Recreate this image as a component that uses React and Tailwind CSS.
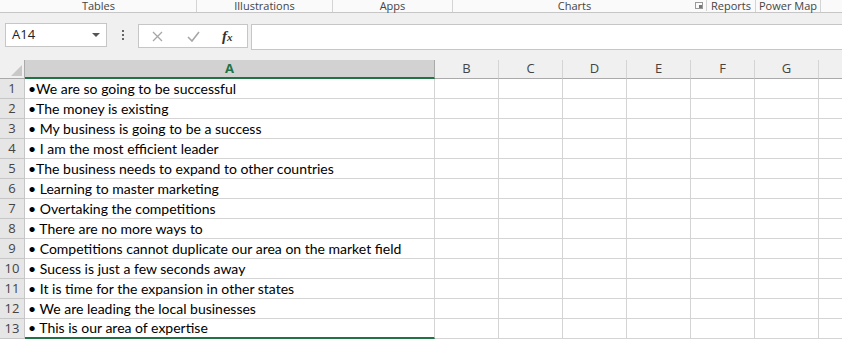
import React from 'react';

const rows = [
  '•We are so going to be successful',
  '•The money is existing',
  '• My business is going to be a success',
  '• I am the most efficient leader',
  '•The business needs to expand to other countries',
  '• Learning to master marketing',
  '• Overtaking the competitions',
  '• There are no more ways to',
  '• Competitions cannot duplicate our area on the market field',
  '• Sucess is just a few seconds away',
  '• It is time for the expansion in other states',
  '• We are leading the local businesses',
  '• This is our area of expertise',
];

const cols = ['B', 'C', 'D', 'E', 'F', 'G'];

const Ribbon = () => (
  <div className="h-[13px] bg-[#fafafa] border-b border-[#c6c6c6] flex items-start text-[11px] text-[#444] leading-[12px]" style={{ fontFamily: '"Open Sans", sans-serif' }}>
    <div className="w-[197px] flex justify-center pl-[1px] border-r border-[#d4d4d4] h-[12px]">Tables</div>
    <div className="w-[136px] flex justify-center border-r border-[#d4d4d4] h-[12px]">Illustrations</div>
    <div className="w-[120px] flex justify-center border-r border-[#d4d4d4] h-[12px]">Apps</div>
    <div className="w-[242px] flex justify-center pl-[1px] h-[12px]">Charts</div>
    <div className="w-[8px] h-[7px] border border-[#999] relative mt-[2px]">
      <div className="absolute right-0 bottom-0 w-[3px] h-[3px] bg-[#777]" />
    </div>
    <div className="w-[4px] h-[11px] border-r border-[#d4d4d4]" />
    <div className="px-[4px] h-[12px] flex border-r border-[#d4d4d4]">Reports</div>
    <div className="px-[3px] h-[12px] flex border-r border-[#d4d4d4]">Power Map</div>
  </div>
);

const FormulaBar = () => (
  <div className="h-[47px] bg-[#f0f0f0] flex items-start pt-[10px] pl-[5px]" style={{ fontFamily: '"Open Sans", sans-serif' }}>
    <div className="w-[102px] h-[24px] bg-white border border-[#c6c6c6] flex items-center justify-between pl-[6px] pr-[6px] text-[13px] text-[#222]">
      <span>A14</span>
      <svg width="8" height="4" viewBox="0 0 8 4"><path d="M0 0h8L4 4z" fill="#555" /></svg>
    </div>
    <div className="w-[31px] flex flex-col items-center justify-center gap-[2px] h-[24px]">
      <div className="w-[2px] h-[2px] bg-[#666]" />
      <div className="w-[2px] h-[2px] bg-[#666]" />
      <div className="w-[2px] h-[2px] bg-[#666]" />
    </div>
    <div className="w-[110px] h-[24px] bg-white border border-[#c6c6c6] flex items-center mt-[1px]">
      <svg className="ml-[13px]" width="11" height="11" viewBox="0 0 11 11"><path d="M1 1l9 9M10 1l-9 9" stroke="#a6a6a6" strokeWidth="1.3" /></svg>
      <svg className="ml-[24px]" width="13" height="11" viewBox="0 0 13 11"><path d="M1 6l4 4 7-9" stroke="#a6a6a6" strokeWidth="1.6" fill="none" /></svg>
      <span className="ml-[22px] text-[15px] italic font-bold text-[#333] leading-none" style={{ fontFamily: '"Liberation Serif", serif' }}>f<span className="text-[11px]">x</span></span>
    </div>
    <div className="flex-1 h-[26px] bg-white border border-[#c6c6c6] border-r-0 ml-[3px] mt-[1px]" />
  </div>
);

const Header = () => (
  <div className="flex h-[19px] bg-[#f0f0f0] text-[13px] text-[#444]" style={{ fontFamily: '"Open Sans", sans-serif' }}>
    <div className="w-[25px] border-r border-b border-[#aaa] relative">
      <svg className="absolute right-[2px] bottom-[2px]" width="11" height="11" viewBox="0 0 11 11"><path d="M11 0v11H0z" fill="#c8c8c8" /></svg>
    </div>
    <div className="w-[410px] bg-[#d2d2d2] border-b-2 border-[#217346] border-r border-r-[#aaa] flex items-center justify-center font-bold text-[#217346]">A</div>
    {cols.map((c) => (
      <div key={c} className="w-[64px] border-r border-b border-[#aaa] border-r-[#d4d4d4] flex items-center justify-center">{c}</div>
    ))}
    <div className="flex-1 border-b border-[#aaa]" />
  </div>
);

const Row = ({ n, text, last }) => (
  <div className="flex h-[20px]">
    <div className="w-[25px] bg-[#e6e6e6] border-r border-b border-[#c6c6c6] flex items-center justify-center pt-[1px] text-[13px] text-[#444]" style={{ fontFamily: '"Open Sans", sans-serif' }}>{n}</div>
    <div className={`w-[410px] border-r border-[#d4d4d4] flex items-end pl-[3px] text-[14px] leading-[18px] text-black whitespace-nowrap ${last ? 'border-b-2 border-b-[#217346]' : 'border-b'}`} style={{ fontFamily: 'Lato, sans-serif' }}>{text}</div>
    {cols.map((c) => (
      <div key={c} className="w-[64px] border-r border-b border-[#d4d4d4]" />
    ))}
    <div className="flex-1 border-b border-[#d4d4d4]" />
  </div>
);

export default function App() {
  return (
    <div className="w-[842px] h-[341px] overflow-hidden bg-white">
      <Ribbon />
      <FormulaBar />
      <Header />
      {rows.map((t, i) => (
        <Row key={i} n={i + 1} text={t} last={i === rows.length - 1} />
      ))}
    </div>
  );
}
